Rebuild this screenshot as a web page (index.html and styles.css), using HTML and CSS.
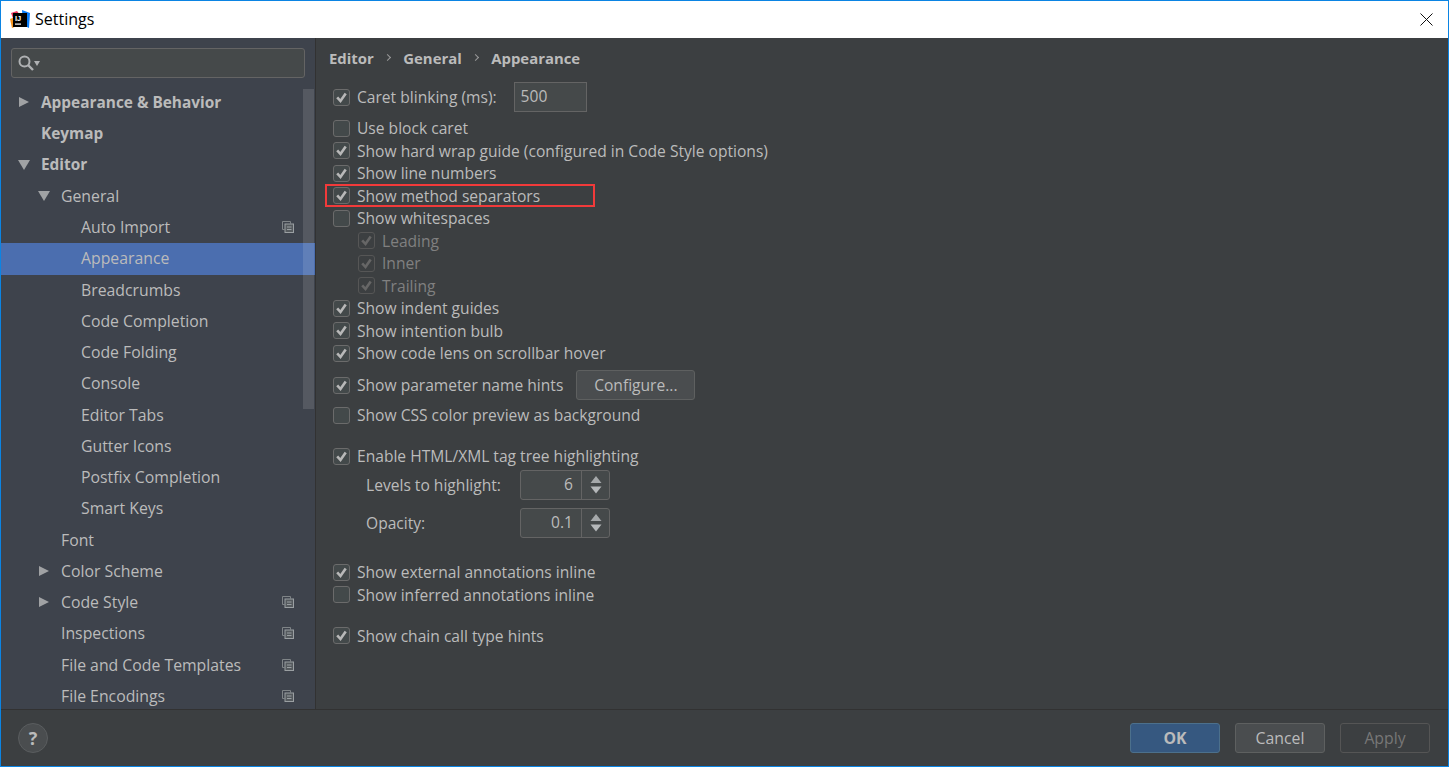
FILE: index.html
```html
<!DOCTYPE html>
<html lang="en">
<head>
<meta charset="utf-8">
<title>Settings</title>
<link rel="stylesheet" href="styles.css">
</head>
<body>
<svg class="defs" width="0" height="0" aria-hidden="true">
  <symbol id="copy" viewBox="0 0 12 12">
    <path d="M2.5 8.5H.5V.5h8v2" fill="none" stroke="#7f8487"/>
    <rect x="3" y="3" width="8.5" height="8.5" fill="#555a5e" stroke="#9a9fa2"/>
    <path d="M5 6h4.5M5 8.5h4.5" stroke="#9a9fa2"/>
  </symbol>
  <symbol id="check" viewBox="0 0 15 15">
    <path d="M3.2 7.3l3.3 3.7 5.2-7.5" fill="none" stroke="currentColor" stroke-width="2.6"/>
  </symbol>
  <symbol id="spin" viewBox="0 0 14 22">
    <path d="M7 2l5.5 7h-11z" fill="#a5a8aa"/>
    <path d="M1.5 12.5h11l-5.5 7z" fill="#b5b8ba"/>
  </symbol>
</svg>
<div class="window">
  <header class="titlebar">
    <svg class="logo" viewBox="0 0 20 20" width="20" height="20">
      <path d="M1 3l6-2 3 4-6 6z" fill="#f0375f"/>
      <path d="M0 9l5-2 2 9-5 2z" fill="#f7941d"/>
      <path d="M12 0l8 3-1 15-6-3z" fill="#087cfa"/>
      <rect x="3" y="3" width="14" height="14" fill="#000"/>
      <text class="logo-text" x="5" y="10.5">IJ</text>
      <rect x="5" y="13.5" width="6" height="1.2" fill="#fff"/>
    </svg>
    <span class="title">Settings</span>
    <svg class="close" viewBox="0 0 13 13" width="13" height="13"><path d="M.5.5l12 12M12.5.5l-12 12" stroke="#111" fill="none"/></svg>
  </header>

  <div class="main">
    <aside class="sidebar">
      <div class="search">
        <svg width="16" height="16" viewBox="0 0 16 16"><circle cx="6.5" cy="6.5" r="5" fill="none" stroke="#afb1b3" stroke-width="2"/><path d="M10 10l5 5" stroke="#afb1b3" stroke-width="2.4"/></svg>
        <span class="search-arrow"></span>
      </div>
      <ul class="tree">
        <li class="node l0 strong"><span class="tw right"></span>Appearance &amp; Behavior</li>
        <li class="node l0 strong">Keymap</li>
        <li class="node l0 strong"><span class="tw down"></span>Editor</li>
        <li class="node l1"><span class="tw down"></span>General</li>
        <li class="node l2">Auto Import<svg class="copy"><use href="#copy"/></svg></li>
        <li class="node l2 selected">Appearance</li>
        <li class="node l2">Breadcrumbs</li>
        <li class="node l2">Code Completion</li>
        <li class="node l2">Code Folding</li>
        <li class="node l2">Console</li>
        <li class="node l2">Editor Tabs</li>
        <li class="node l2">Gutter Icons</li>
        <li class="node l2">Postfix Completion</li>
        <li class="node l2">Smart Keys</li>
        <li class="node l1">Font</li>
        <li class="node l1"><span class="tw right"></span>Color Scheme</li>
        <li class="node l1"><span class="tw right"></span>Code Style<svg class="copy"><use href="#copy"/></svg></li>
        <li class="node l1">Inspections<svg class="copy"><use href="#copy"/></svg></li>
        <li class="node l1">File and Code Templates<svg class="copy"><use href="#copy"/></svg></li>
        <li class="node l1">File Encodings<svg class="copy"><use href="#copy"/></svg></li>
      </ul>
      <div class="scrollbar"></div>
    </aside>

    <section class="content">
      <nav class="crumbs"><span>Editor</span><i class="sep"></i><span>General</span><i class="sep"></i><span>Appearance</span></nav>

      <div class="row tall gap-a"><span class="cb"><svg><use href="#check"/></svg></span>Caret blinking (ms):<span class="field">500</span></div>
      <div class="row gap-b"><span class="cb"></span>Use block caret</div>
      <div class="row"><span class="cb"><svg><use href="#check"/></svg></span>Show hard wrap guide (configured in Code Style options)</div>
      <div class="row"><span class="cb"><svg><use href="#check"/></svg></span>Show line numbers</div>
      <div class="row"><span class="cb"><svg><use href="#check"/></svg></span>Show method separators<span class="marker"></span></div>
      <div class="row"><span class="cb"></span>Show whitespaces</div>
      <div class="row sub disabled"><span class="cb"><svg><use href="#check"/></svg></span>Leading</div>
      <div class="row sub disabled"><span class="cb"><svg><use href="#check"/></svg></span>Inner</div>
      <div class="row sub disabled"><span class="cb"><svg><use href="#check"/></svg></span>Trailing</div>
      <div class="row"><span class="cb"><svg><use href="#check"/></svg></span>Show indent guides</div>
      <div class="row"><span class="cb"><svg><use href="#check"/></svg></span>Show intention bulb</div>
      <div class="row"><span class="cb"><svg><use href="#check"/></svg></span>Show code lens on scrollbar hover</div>
      <div class="row tall gap-c"><span class="cb"><svg><use href="#check"/></svg></span>Show parameter name hints<button class="btn configure">Configure...</button></div>
      <div class="row gap-d"><span class="cb"></span>Show CSS color preview as background</div>

      <div class="row gap-e"><span class="cb"><svg><use href="#check"/></svg></span>Enable HTML/XML tag tree highlighting</div>
      <div class="row tall field-row gap-f"><label class="lbl">Levels to highlight:</label><span class="spinner"><span class="val">6</span><span class="arrows"><svg><use href="#spin"/></svg></span></span></div>
      <div class="row tall field-row gap-g"><label class="lbl">Opacity:</label><span class="spinner"><span class="val">0.1</span><span class="arrows"><svg><use href="#spin"/></svg></span></span></div>

      <div class="row gap-h"><span class="cb"><svg><use href="#check"/></svg></span>Show external annotations inline</div>
      <div class="row"><span class="cb"></span>Show inferred annotations inline</div>
      <div class="row gap-e"><span class="cb"><svg><use href="#check"/></svg></span>Show chain call type hints</div>
    </section>
  </div>

  <footer class="footer">
    <span class="help">?</span>
    <div class="actions">
      <button class="btn primary">OK</button>
      <button class="btn">Cancel</button>
      <button class="btn ghost">Apply</button>
    </div>
  </footer>
</div>
</body>
</html>
```
FILE: styles.css
```css
* { box-sizing: border-box; }
html, body { margin: 0; height: 100%; overflow: hidden; }
body { font-family: "Open Sans", "Noto Sans", sans-serif; font-size: 15.8px; color: #bbbbbb; background: #3c3f41; }
.defs { position: absolute; }

.window { width: 1449px; height: 767px; border: 1px solid #0b84e3; display: flex; flex-direction: column; }

.titlebar { height: 37px; flex: none; background: #fff; display: flex; align-items: center; padding: 0 15px 0 9px; color: #000; }
.logo { flex: none; margin-right: 5px; }
.logo-text { font: bold 7.5px "Liberation Sans", sans-serif; fill: #fff; }
.title { font-size: 16px; flex: 1; padding-bottom: 2px; }
.close { flex: none; }

.main { flex: 1; min-height: 0; display: flex; }

.sidebar { position: relative; width: 315px; flex: none; background: #3e434c; border-right: 1px solid #323232; overflow: hidden; padding-top: 10px; }
.search { height: 30px; margin: 0 10px; background: #45494a; border: 1px solid #646464; border-radius: 3px; display: flex; align-items: center; padding-left: 6px; }
.search-arrow { width: 0; height: 0; border: 3.5px solid transparent; border-top: 5px solid #afb1b3; border-bottom: 0; }
.tree { list-style: none; margin: 9px 0 0; padding: 0; }
.node { position: relative; height: 31.25px; display: flex; align-items: center; white-space: nowrap; padding-bottom: 1px; }
.l0 { padding-left: 40px; }
.l1 { padding-left: 60px; }
.l2 { padding-left: 80px; }
.strong { font-weight: 700; font-size: 15.4px; }
.selected { background: #4b6eaf; }
.tw { position: absolute; width: 0; height: 0; border-style: solid; border-color: transparent; }
.l0 .tw { left: 17px; }
.l1 .tw { left: 37px; }
.tw.right { margin-left: 1px; border-width: 5.5px 0 5.5px 10px; border-left-color: #a0a2a4; }
.tw.down { border-width: 10px 6px 0 6px; border-top-color: #a0a2a4; }
.copy { position: absolute; left: 281px; top: 9px; width: 12px; height: 12px; }
.scrollbar { position: absolute; left: 302px; top: 51px; width: 11px; height: 320px; background: rgba(255, 255, 255, 0.12); }

.content { flex: 1; min-width: 0; padding-left: 9px; background: #3c3f41; font-size: 15.6px; }
.crumbs { height: 40px; display: flex; align-items: center; padding-left: 4px; font-weight: 700; font-size: 14.9px; padding-bottom: 1px; }
.sep { width: 5px; height: 5px; margin: 0 13.5px 0 11px; border-top: 1px solid #9a9a9a; border-right: 1px solid #9a9a9a; transform: rotate(45deg); }

.row { position: relative; height: 22.5px; display: flex; align-items: center; padding-left: 8px; white-space: nowrap; }
.row.tall { height: 30px; }
.sub { padding-left: 33px; }
.disabled { color: #808080; }
.gap-a { margin-top: 4px; }
.gap-b { margin-top: 4.75px; }
.gap-c { margin-top: 5.75px; }
.gap-d { margin-top: 3.75px; }
.gap-e { margin-top: 18.5px; }
.gap-f { margin-top: 2.75px; }
.gap-g { margin-top: 8px; }
.gap-h { margin-top: 22.75px; }

.cb { width: 17px; height: 17px; flex: none; margin-right: 7px; border: 1px solid #6b6b6b; border-radius: 3px; background: #43494a; color: #b8b8b8; display: flex; }
.cb svg { width: 15px; height: 15px; }
.disabled .cb { border-color: #565656; background: #3c3f41; color: #666; }

.field { width: 73px; height: 30px; margin-left: 17px; padding-left: 6px; background: #45494a; border: 1px solid #646464; line-height: 27px; }
.field-row { padding-left: 41px; }
.lbl { width: 154px; flex: none; }
.spinner { width: 90px; height: 30px; display: flex; background: #45494a; border: 1px solid #646464; border-radius: 3px; }
.val { width: 61px; flex: none; text-align: right; line-height: 27px; padding-right: 8px; border-right: 1px solid #646464; }
.arrows { flex: 1; display: flex; align-items: center; justify-content: center; }
.arrows svg { width: 14px; height: 22px; }

.marker { position: absolute; left: 0; top: 0; width: 270px; height: 23px; border: 2px solid #f23a3a; }

.btn { width: 90px; height: 30px; padding: 0; font: inherit; color: #bbbbbb; background: #4a4d4f; border: 1px solid #5e6060; border-radius: 3px; }
.configure { width: 119px; margin-left: 13px; }
.primary { background: #365880; border-color: #4c708c; font-weight: 700; }
.ghost { background: transparent; border-color: #555; color: #777; }

.footer { height: 57px; flex: none; background: #3c3f41; border-top: 1px solid #323232; display: flex; align-items: center; justify-content: space-between; padding: 0 18px; }
.help { width: 30px; height: 30px; border-radius: 50%; background: #4a4d4f; border: 1px solid #5a5d5f; color: #bbb; font-weight: 700; font-size: 18px; display: flex; align-items: center; justify-content: center; margin-left: -1px; }
.actions { display: flex; gap: 15px; }
```
